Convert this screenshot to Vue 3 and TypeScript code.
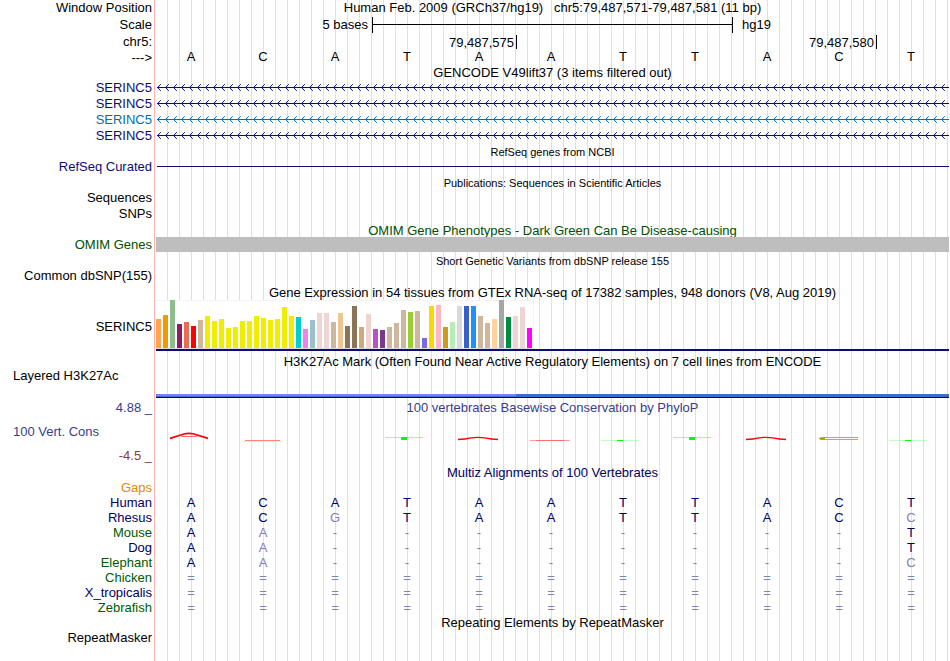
<script setup lang="ts">
interface Alignment {
  species: string
  tone: 'navy' | 'green'
  bases: string
  mismatch: number[]
}

const sequence: string[] = 'ACATAATTACT'.split('')

const transcripts: { name: string; color: string }[] = [
  { name: 'SERINC5', color: '#0c0c78' },
  { name: 'SERINC5', color: '#0c0c78' },
  { name: 'SERINC5', color: '#006eb4' },
  { name: 'SERINC5', color: '#0c0c78' },
]

const tissues: [number, string][] = [
  [29, '#ffa54f'], [33, '#ee9a00'], [48, '#8fbc8f'], [24, '#8b1c62'], [26, '#ee6a50'],
  [22, '#ff0000'], [28, '#cdb79e'], [32, '#eeee00'], [27, '#eeee00'], [29, '#eeee00'],
  [20, '#eeee00'], [21, '#eeee00'], [27, '#eeee00'], [27, '#eeee00'], [32, '#eeee00'],
  [30, '#eeee00'], [28, '#eeee00'], [29, '#eeee00'], [41, '#eeee00'], [32, '#eeee00'],
  [31, '#00cdcd'], [19, '#ee82ee'], [28, '#9ac0cd'], [35, '#eed5d2'], [35, '#eed5d2'],
  [26, '#cdb79e'], [35, '#eec591'], [22, '#8b7355'], [42, '#8b7355'], [21, '#cdaa7d'],
  [34, '#eed5d2'], [19, '#b452cd'], [18, '#7a378b'], [21, '#cdb79e'], [25, '#cdb79e'],
  [38, '#cdb79e'], [36, '#9acd32'], [37, '#cdb79e'], [10, '#7a67ee'], [42, '#ffd700'],
  [43, '#ffb6c1'], [21, '#cd9b1d'], [26, '#b4eeb4'], [42, '#d9d9d9'], [42, '#3a5fcd'],
  [42, '#1e90ff'], [32, '#cdb79e'], [25, '#cdb79e'], [29, '#ffd39b'], [48, '#a6a6a6'],
  [31, '#008b45'], [32, '#eed5d2'], [41, '#eed5d2'], [20, '#ff00ff'],
]

const conservation: string[] = [
  'a-tall', 'c-flat', 'none', 't', 'a', 'a-flat', 't-flat', 't', 'a', 'c', 't-flat',
]

const alignments: Alignment[] = [
  { species: 'Human', tone: 'navy', bases: 'ACATAATTACT', mismatch: [] },
  { species: 'Rhesus', tone: 'navy', bases: 'ACGTAATTACC', mismatch: [2, 10] },
  { species: 'Mouse', tone: 'green', bases: 'AA--------T', mismatch: [1] },
  { species: 'Dog', tone: 'navy', bases: 'AA--------T', mismatch: [1] },
  { species: 'Elephant', tone: 'green', bases: 'AA--------C', mismatch: [1, 10] },
  { species: 'Chicken', tone: 'green', bases: '===========', mismatch: [] },
  { species: 'X_tropicalis', tone: 'navy', bases: '===========', mismatch: [] },
  { species: 'Zebrafish', tone: 'green', bases: '===========', mismatch: [] },
]

const isPale = (row: Alignment, base: string, i: number): boolean =>
  base === '-' || base === '=' || row.mismatch.includes(i)
</script>

<template>
  <main class="browser">
    <header class="row h16">
      <span class="label">Window Position</span>
      <h1 class="title">Human Feb. 2009 (GRCh37/hg19)&nbsp;&nbsp; chr5:79,487,571-79,487,581 (11 bp)</h1>
    </header>

    <div class="row h18">
      <span class="label">Scale</span>
      <div class="bases">
        <span class="scale-size">5 bases</span>
        <span class="scale-bar"></span>
        <span class="assembly">hg19</span>
      </div>
    </div>
    <div class="row h16">
      <span class="label">chr5:</span>
      <div class="bases">
        <span class="tick">79,487,575</span>
        <span class="tick">79,487,580</span>
      </div>
    </div>
    <div class="row h16">
      <span class="label">---&gt;</span>
      <div class="bases letters">
        <span v-for="(base, i) in sequence" :key="i">{{ base }}</span>
      </div>
    </div>

    <section>
      <div class="row h14"><h2 class="title">GENCODE V49lift37 (3 items filtered out)</h2></div>
      <div v-for="(t, i) in transcripts" :key="i" class="row h16" :style="{ color: t.color }">
        <span class="label">{{ t.name }}</span>
        <svg class="track intron" height="16" aria-hidden="true">
          <defs>
            <pattern :id="'strand' + i" x="1" width="8" height="16" patternUnits="userSpaceOnUse">
              <path d="M3.8 4.2L0.5 7.5L3.8 10.8" fill="none" stroke="currentColor" />
            </pattern>
          </defs>
          <rect x="1" width="100%" height="16" :fill="`url(#strand${i})`" />
          <rect x="1" y="7" width="100%" height="1" fill="currentColor" />
        </svg>
      </div>
    </section>

    <section>
      <div class="row h16"><h2 class="title small">RefSeq genes from NCBI</h2></div>
      <div class="row h14 refseq">
        <span class="label">RefSeq Curated</span>
        <span class="track refseq-line"></span>
      </div>
    </section>

    <section>
      <div class="row h18"><h2 class="title small">Publications: Sequences in Scientific Articles</h2></div>
      <div class="row h12"><span class="label">Sequences</span></div>
      <div class="row h20"><span class="label">SNPs</span></div>
    </section>

    <section class="omim">
      <div class="row h13"><h2 class="title">OMIM Gene Phenotypes - Dark Green Can Be Disease-causing</h2></div>
      <div class="row h15">
        <span class="label">OMIM Genes</span>
        <span class="track omim-bar"></span>
      </div>
    </section>

    <section>
      <div class="row h18"><h2 class="title small">Short Genetic Variants from dbSNP release 155</h2></div>
      <div class="row h12"><span class="label">Common dbSNP(155)</span></div>
    </section>

    <section class="expression">
      <div class="row h14"><h2 class="title">Gene Expression in 54 tissues from GTEx RNA-seq of 17382 samples, 948 donors (V8, Aug 2019)</h2></div>
      <div class="row gtex">
        <span class="label">SERINC5</span>
        <div class="track gene-model">
          <div class="tissues">
            <i v-for="([height, color], i) in tissues" :key="i" :style="{ height: height + 'px', background: color }"></i>
          </div>
        </div>
      </div>
    </section>

    <section>
      <div class="row h15"><h2 class="title">H3K27Ac Mark (Often Found Near Active Regulatory Elements) on 7 cell lines from ENCODE</h2></div>
      <div class="row h14"><span class="label left">Layered H3K27Ac</span></div>
      <div class="row h16 signal">
        <span class="track acetyl"><i></i></span>
      </div>
    </section>

    <section class="phylop">
      <div class="row h18">
        <span class="label">4.88 _</span>
        <h2 class="title">100 vertebrates Basewise Conservation by PhyloP</h2>
      </div>
      <div class="row h30">
        <span class="label left">100 Vert. Cons</span>
        <div class="bases">
          <svg v-for="(kind, i) in conservation" :key="i" viewBox="0 -12 72 28" height="28" aria-hidden="true">
            <g v-if="kind === 'a-tall'" fill="none" stroke="#ff0000">
              <path d="M15 8.4L29 4Q34 2.8 39 4L53 8.4" stroke-width="1.7" />
              <path d="M26 6.5H42" stroke-width="0.8" opacity="0.7" />
            </g>
            <g v-else-if="kind === 'a'" fill="none" stroke="#ff0000">
              <path d="M15 9.5Q22 9.2 28 7.8Q35 6.8 42 7.8Q48 9.2 55 9.5" stroke-width="1.3" />
            </g>
            <g v-else-if="kind === 'a-flat'">
              <rect x="15" y="10" width="40" height="1" fill="#ff9a9a" />
              <rect x="21" y="10" width="28" height="1" fill="#ff6e6e" />
            </g>
            <g v-else-if="kind === 'c-flat'">
              <rect x="18" y="10" width="35" height="1" fill="#ff8878" />
              <rect x="16" y="11" width="39" height="1" fill="#e2dcb0" opacity="0.6" />
            </g>
            <g v-else-if="kind === 'c'" fill="none" stroke="#b4b43c">
              <path d="M55 7.5H21Q17 8 16 8.5Q17 9.5 21 9.5H55" />
              <path d="M17 8.5H22" stroke="#a0a000" stroke-width="2" />
            </g>
            <g v-else-if="kind === 't'" fill="#00ff00">
              <rect x="14" y="7" width="38" height="1" opacity="0.4" />
              <rect x="30" y="7" width="6" height="3" />
            </g>
            <g v-else-if="kind === 't-flat'" fill="#00ff00">
              <rect x="14" y="10" width="38" height="1" opacity="0.25" />
              <rect x="30" y="10" width="6" height="1" />
            </g>
          </svg>
        </div>
      </div>
      <div class="row h18 minimum"><span class="label">-4.5 _</span></div>
    </section>

    <section class="multiz">
      <div class="row h16"><h2 class="title">Multiz Alignments of 100 Vertebrates</h2></div>
      <div class="row h14 gaps"><span class="label">Gaps</span></div>
      <table>
        <colgroup><col class="species" /><col v-for="i in 11" :key="i" /></colgroup>
        <tbody>
          <tr v-for="row in alignments" :key="row.species">
            <th scope="row" :class="row.tone">{{ row.species }}</th>
            <td v-for="(base, i) in row.bases.split('')" :key="i" :class="{ pale: isPale(row, base, i) }">{{ base }}</td>
          </tr>
        </tbody>
      </table>
    </section>

    <section>
      <div class="row h16"><h2 class="title">Repeating Elements by RepeatMasker</h2></div>
      <div class="row h14"><span class="label">RepeatMasker</span></div>
    </section>
  </main>
</template>

<style>
body {
  margin: 0;
  background: #fff;
}
</style>

<style scoped>
.browser {
  box-sizing: border-box;
  min-height: 100vh;
  font: 13px/16px "Liberation Sans", Arial, sans-serif;
  color: #000;
  background:
    linear-gradient(#ffb4b4, #ffb4b4) 154px 0 / 1px 100% no-repeat,
    linear-gradient(#fff, #fff) 0 0 / 156px 100% no-repeat,
    linear-gradient(90deg, #dcdcff 1px, transparent 1px) 167px 0 / 12px 100% repeat-x;
}

.row {
  display: grid;
  grid-template-columns: 155px minmax(0, 1fr);
  grid-template-rows: minmax(0, 1fr);
  align-items: center;
}
.h12 { height: 12px; }
.h13 { height: 13px; }
.h14 { height: 14px; }
.h15 { height: 15px; }
.h16 { height: 16px; }
.h18 { height: 18px; }
.h20 { height: 20px; }
.h30 { height: 30px; }

.label {
  grid-column: 1;
  padding-right: 3px;
  text-align: right;
  white-space: nowrap;
}
.label.left {
  padding-left: 13px;
  text-align: left;
}
.title {
  grid-column: 2;
  margin: 0;
  font-size: 13px;
  font-weight: normal;
  text-align: center;
  white-space: nowrap;
}
.title.small { font-size: 11px; }
.track {
  grid-column: 2;
  margin: 0 1px;
}

.bases {
  grid-column: 2;
  display: grid;
  grid-template-columns: repeat(11, minmax(0, 1fr));
  align-items: center;
  margin-right: 3px;
}
.bases svg {
  display: block;
  width: 100%;
}
.letters {
  padding-bottom: 2px;
  text-align: center;
}

.scale-size {
  grid-column: span 3;
  padding-right: 3px;
  text-align: right;
}
.scale-bar {
  grid-column: span 5;
  height: 16px;
  margin: 0 -2px 0 1px;
  border: solid #000;
  border-width: 0 1px;
  background: linear-gradient(#000, #000) 0 7px / 100% 1px no-repeat;
}
.assembly {
  grid-column: span 3;
  padding-left: 11px;
}
.tick {
  grid-column: span 5;
  height: 14px;
  margin-right: -2px;
  padding-right: 2px;
  border-right: 1px solid #000;
  text-align: right;
}

.intron {
  display: block;
  width: calc(100% - 2px);
}
.refseq { color: #0c0c78; }
.refseq-line {
  align-self: start;
  height: 1px;
  margin: 6px 1px 0 2px;
  background: #0c0c78;
}
.omim { color: #005000; }
.omim-bar {
  height: 15px;
  background: #bebebe;
}

.expression { padding-top: 4px; }
.gtex { height: 54px; }
.gene-model {
  align-self: start;
  border-bottom: 2px solid #0c0c78;
}
.tissues {
  box-sizing: border-box;
  display: flex;
  gap: 2px;
  align-items: flex-end;
  width: 378px;
  height: 49px;
  background: #fff;
  border-bottom: 1px solid #dcdcdc;
  box-shadow: inset 0 1px #f3f3f3, inset -1px 0 #f3f3f3;
}
.tissues i { width: 5px; }

.signal { align-items: start; }
.acetyl {
  height: 3px;
  margin-top: 11px;
  border-bottom: 1px solid #0a0a32;
  background: #3c6ed2;
}
.acetyl i {
  display: block;
  width: 45.4%;
  height: 2px;
  background: #8080ff;
}

.phylop { color: #3c3c8c; }
.minimum { color: #8c3c3c; }
.multiz { color: #000064; }
.gaps { color: #e68a00; }

table {
  width: calc(100% - 3px);
  table-layout: fixed;
  border-collapse: collapse;
  line-height: 15px;
}
.species { width: 155px; }
th {
  padding: 0 3px 0 0;
  font-weight: normal;
  text-align: right;
}
td {
  padding: 0;
  text-align: center;
}
.navy { color: #000064; }
.green { color: #005a00; }
.pale { color: #8080b4; }
</style>
